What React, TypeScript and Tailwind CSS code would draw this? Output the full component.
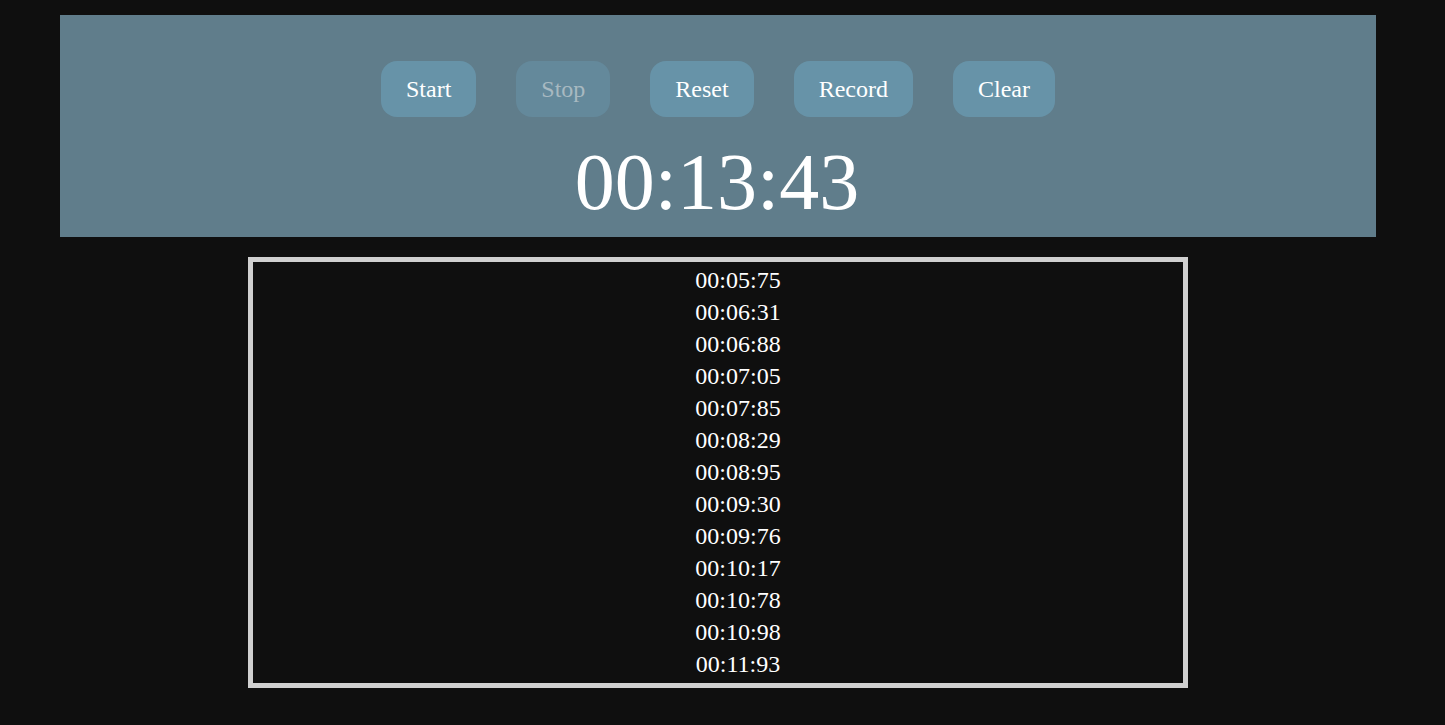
import React from "react";

const records = [
  "00:05:75",
  "00:06:31",
  "00:06:88",
  "00:07:05",
  "00:07:85",
  "00:08:29",
  "00:08:95",
  "00:09:30",
  "00:09:76",
  "00:10:17",
  "00:10:78",
  "00:10:98",
  "00:11:93",
];

const buttons = [
  { label: "Start", disabled: false },
  { label: "Stop", disabled: true },
  { label: "Reset", disabled: false },
  { label: "Record", disabled: false },
  { label: "Clear", disabled: false },
];

export default function App() {
  return (
    <div className="min-h-[725px] w-full bg-[#0f0f0f] font-['Liberation_Serif',serif]">
      <div className="w-[1436px] pt-[15px]">
        {/* Timer panel */}
        <div className="mx-[60px] bg-[#607d8b] pt-[46px] pb-[15px]">
          <div className="flex justify-center">
            {buttons.map((b) => (
              <button
                key={b.label}
                disabled={b.disabled}
                className={`mx-[20px] h-[56px] px-[25px] rounded-[16px] text-[24px] leading-none ${
                  b.disabled ? "bg-[#64899b] text-[#a8b9c1]" : "bg-[#6793a8] text-white"
                }`}
              >
                {b.label}
              </button>
            ))}
          </div>
          <div className="mt-[25px] ml-[-2px] text-center text-[80px] leading-[80px] text-white">
            00:13:43
          </div>
        </div>

        {/* Recorded laps */}
        <ul className="mx-auto mt-[20px] h-[431px] w-[940px] overflow-hidden border-[5px] border-[#d0d0d0] pt-[2px] pl-[40px]">
          {records.map((r) => (
            <li key={r} className="text-center text-[24px] leading-[32px] text-white">
              {r}
            </li>
          ))}
        </ul>
      </div>
    </div>
  );
}
